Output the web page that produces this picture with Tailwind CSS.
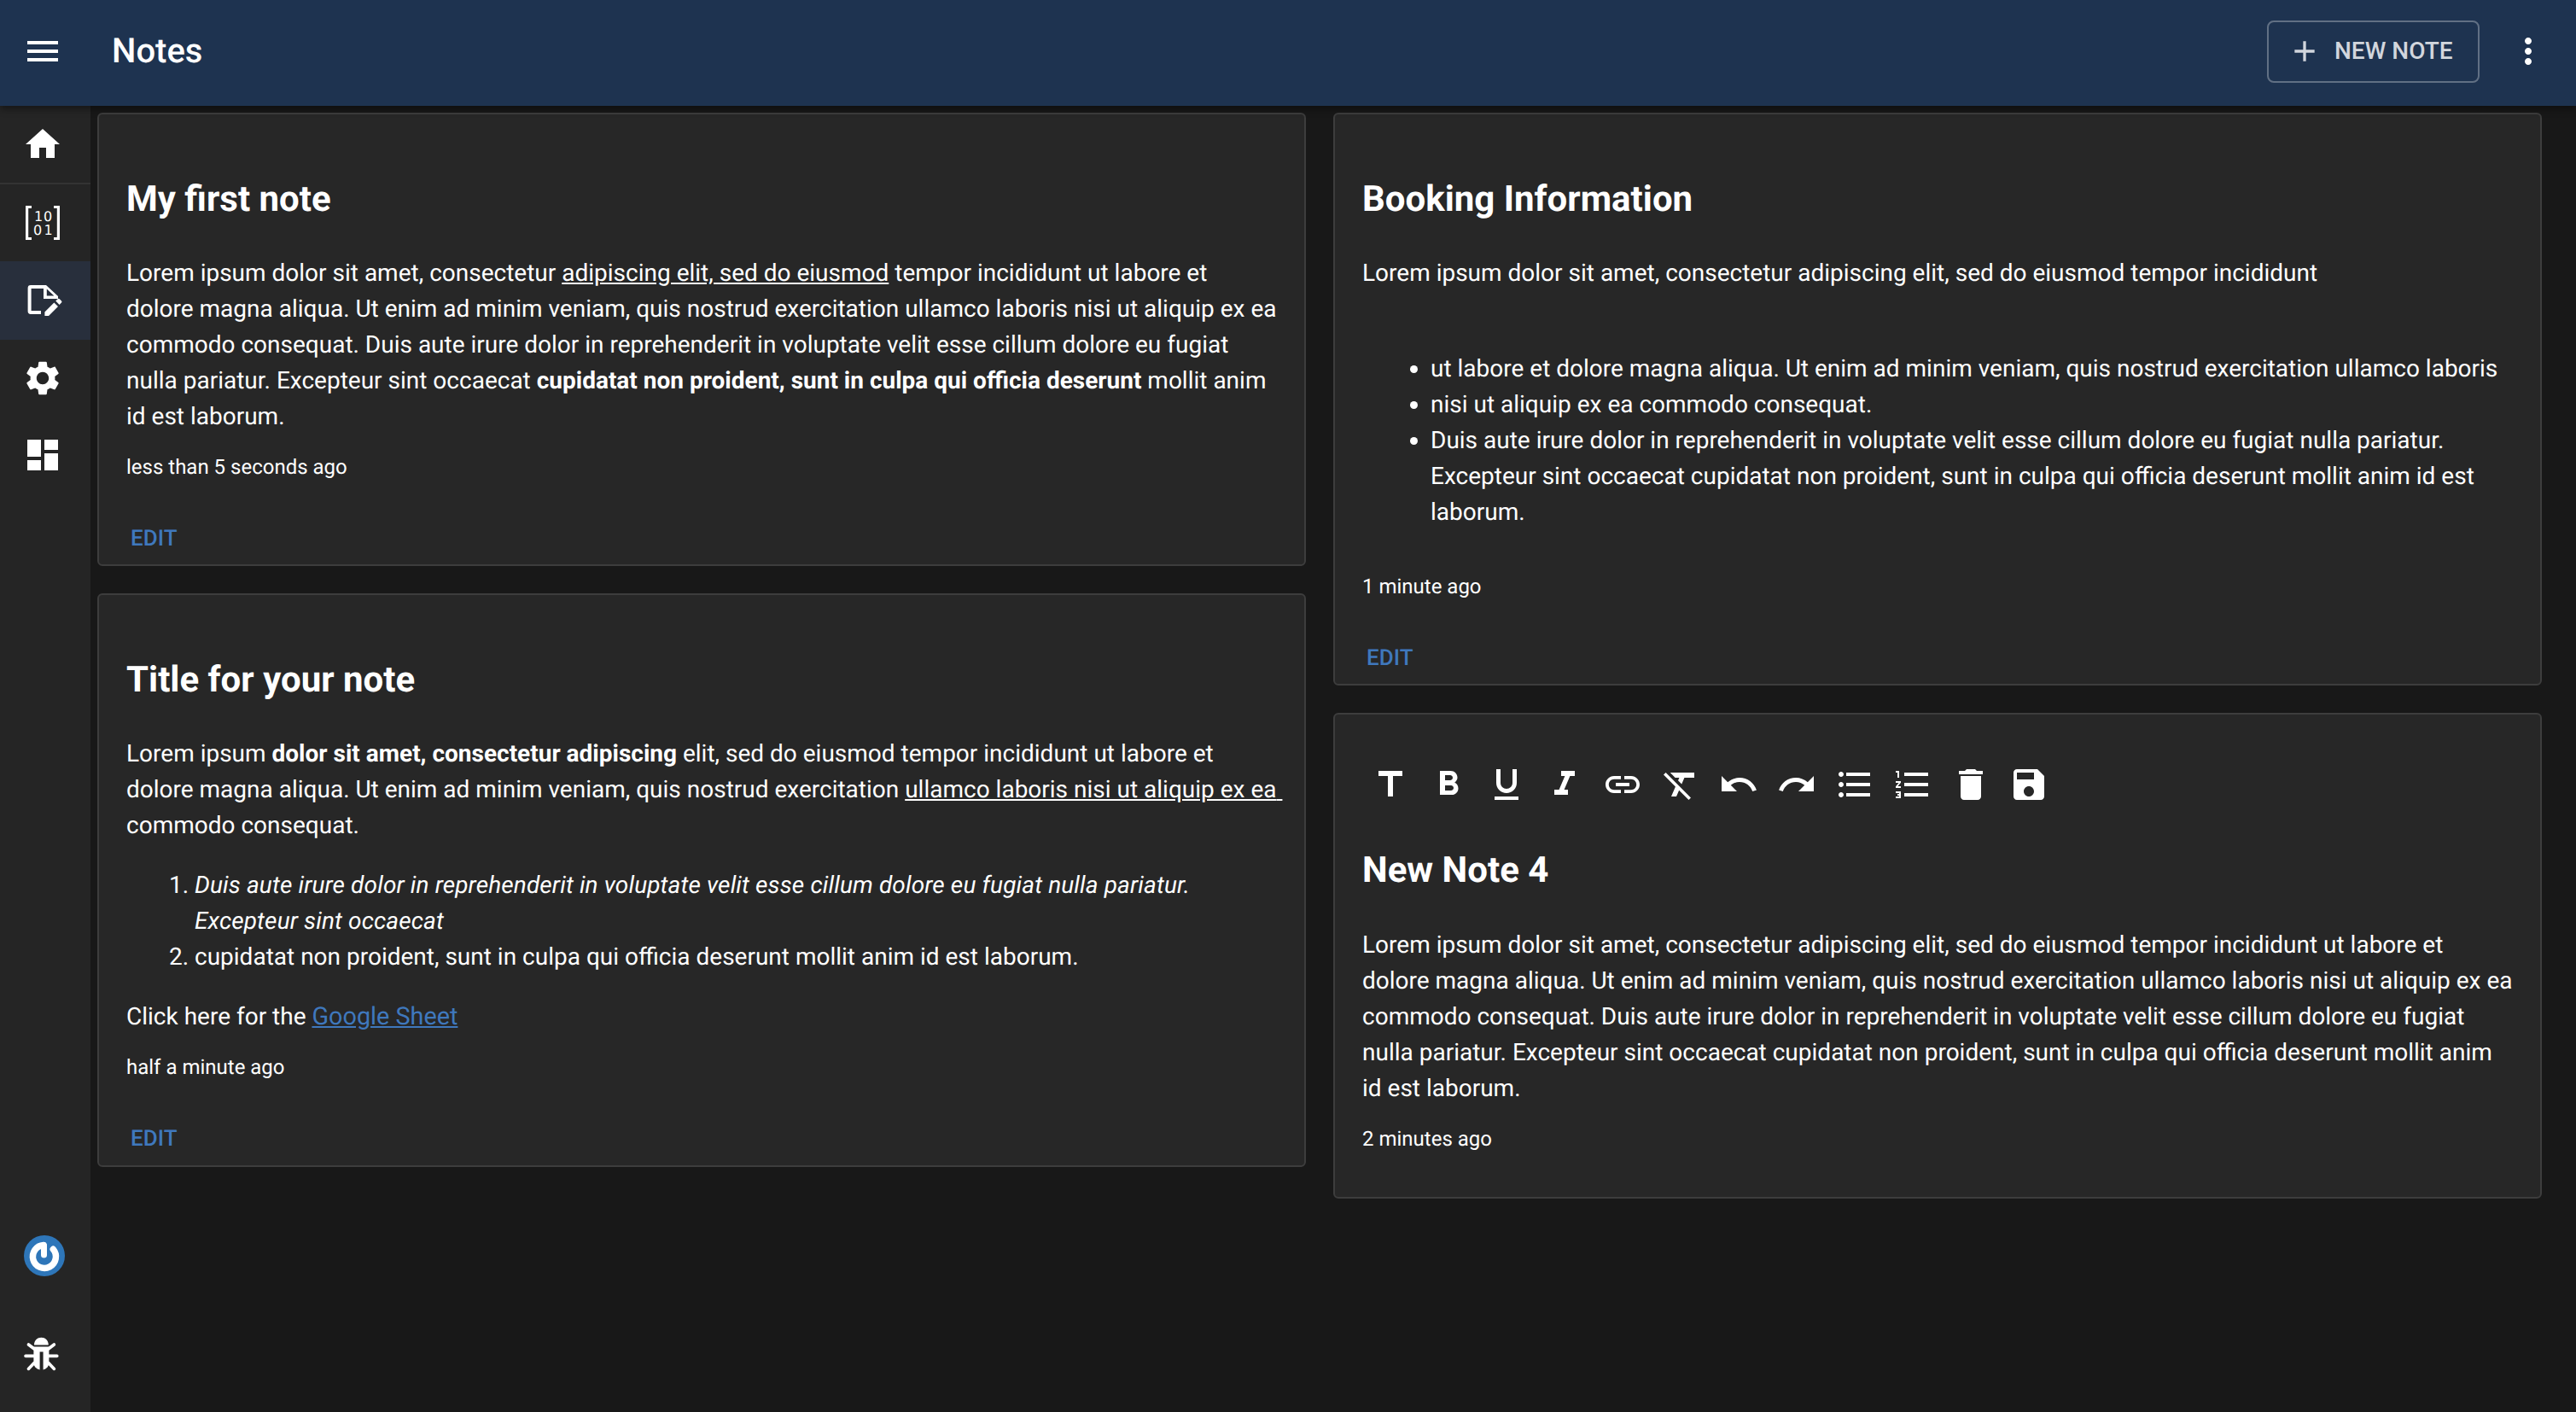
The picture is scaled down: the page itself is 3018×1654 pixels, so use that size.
<!DOCTYPE html>
<html><head><meta charset="utf-8"><script src="https://cdn.jsdelivr.net/npm/@tailwindcss/browser@4"></script></head>
<body class="bg-[#181818] text-white font-['Roboto',sans-serif] [text-rendering:geometricPrecision] h-[1654px] w-[3018px] overflow-hidden flex flex-col">
<header class="h-[124px] shrink-0 bg-[#1e3350] flex items-center pl-[26px] pr-[38px] pb-[4px] shadow-[0_4px_8px_rgba(0,0,0,0.4)] relative z-10">
<svg class="w-[48px] h-[48px] fill-white" viewBox="0 0 24 24"><path d="M3 18h18v-2H3v2zm0-5h18v-2H3v2zm0-7v2h18V6H3z"/></svg>
<h1 class="ml-[57px] text-[40px] leading-[60px] font-medium grow">Notes</h1>
<button class="h-[73px] w-[249px] border-2 border-white/30 rounded-[8px] flex items-center pl-[22px] text-[28px] font-medium text-[#d2d6dd] leading-none">
<svg class="w-[40px] h-[40px] fill-[#d2d6dd] mr-[15px]" viewBox="0 0 24 24"><path d="M19 13h-6v6h-2v-6H5v-2h6V5h2v6h6v2z"/></svg>NEW NOTE</button>
<svg class="ml-[33px] w-[48px] h-[48px] fill-white -mr-[6px]" viewBox="0 0 24 24"><path d="M12 8c1.100 0 2-.9 2-2s-.9-2-2-2-2 .9-2 2 .9 2 2 2zm0 2c-1.100 0-2 .9-2 2s.9 2 2 2 2-.9 2-2-.9-2-2-2zm0 6c-1.100 0-2 .9-2 2s.9 2 2 2 2-.9 2-2-.9-2-2-2z"/></svg>
</header>
<div class="flex grow min-h-0">
<nav class="w-[106px] shrink-0 bg-[#252525] flex flex-col">
<div class="h-[92px] flex items-center pl-[26px] border-b-2 border-[#333]"><svg class="w-[48px] h-[48px] fill-white" viewBox="0 0 24 24"><path d="M10 20v-6h4v6h5v-8h3L12 3 2 12h3v8z"/></svg></div>
<div class="h-[90px] flex items-center pl-[26px]"><svg class="w-[48px] h-[48px] fill-white" viewBox="0 0 24 24"><path d="M2 2h3.500v1.500H3.600v17h1.900V22H2zM22 2h-3.500v1.500h1.900v17h-1.900V22H22z"/><text x="9.600" y="11" font-size="8" font-family="DejaVu Sans" text-anchor="middle">1</text><text x="15" y="11" font-size="8" font-family="DejaVu Sans" text-anchor="middle">0</text><text x="9" y="19" font-size="8" font-family="DejaVu Sans" text-anchor="middle">0</text><text x="15.300" y="19" font-size="8" font-family="DejaVu Sans" text-anchor="middle">1</text></svg></div>
<div class="h-[92px] flex items-center pl-[26px] bg-[#282f3c]"><svg class="w-[48px] h-[48px] fill-white" viewBox="0 0 24 24"><path d="M5 3h8.500v2H5.300v13H11v2H5a1.700 1.700 0 0 1-1.700-1.700V4.700A1.700 1.700 0 0 1 5 3z"/><path fill-rule="evenodd" d="M13 3h1l7 6.500V11H12.500V3zM14.400 5.300v4h4.300z"/><path d="M13.200 21v-2.300l5.500-5.500 2.300 2.300L15.500 21zM19.600 12.300l1.200-1.200a.8.8 0 0 1 1.100 0l1.100 1.100a.8.8 0 0 1 0 1.100l-1.200 1.200z"/></svg></div>
<div class="h-[90px] flex items-center pl-[26px]"><svg class="w-[48px] h-[48px] fill-white" viewBox="0 0 24 24"><path d="M19.140 12.940c.04-.3.06-.61.06-.94 0-.32-.02-.64-.07-.94l2.030-1.580c.18-.14.23-.41.12-.61l-1.920-3.320c-.12-.22-.37-.29-.59-.22l-2.390.96c-.5-.38-1.030-.7-1.620-.94l-.36-2.540c-.04-.24-.24-.41-.48-.41h-3.840c-.24 0-.43.17-.47.41l-.36 2.540c-.59.24-1.130.57-1.620.94l-2.390-.96c-.22-.08-.47 0-.59.22L2.740 8.870c-.12.21-.08.47.12.61l2.030 1.580c-.05.3-.09.63-.09.94s.02.64.07.94l-2.030 1.580c-.18.14-.23.41-.12.61l1.920 3.320c.12.22.37.29.59.22l2.390-.96c.5.38 1.030.7 1.620.94l.36 2.540c.05.24.24.41.48.41h3.840c.24 0 .44-.17.47-.41l.36-2.540c.59-.24 1.130-.56 1.620-.94l2.390.96c.22.08.47 0 .59-.22l1.920-3.320c.12-.22.07-.47-.12-.61l-2.010-1.580zM12 15.600c-1.980 0-3.600-1.620-3.600-3.600s1.620-3.600 3.600-3.600 3.600 1.620 3.600 3.600-1.620 3.600-3.600 3.600z"/></svg></div>
<div class="h-[90px] flex items-center pl-[26px]"><svg class="w-[48px] h-[48px] fill-white" viewBox="0 0 24 24"><path d="M3 13h8V3H3v10zm0 8h8v-6H3v6zm10 0h8V11h-8v10zm0-18v6h8V3h-8z"/></svg></div>
<div class="mt-auto flex flex-col">
<div class="pl-[28px] h-[48px]"><svg class="w-[48px] h-[48px]" viewBox="0 0 48 48"><circle cx="24" cy="24" r="24" fill="#2e76b9"/><path d="M34.300 16.300A13.500 13.500 0 1 1 23 11.500" fill="none" stroke="#fff" stroke-width="7.500" stroke-linecap="round"/><path d="M23.500 12v11" stroke="#fff" stroke-width="7" stroke-linecap="round"/></svg></div>
<div class="pl-[24px] mt-[67px] mb-[44px]"><svg class="w-[48px] h-[48px] fill-white" viewBox="0 0 24 24"><path d="M8 6.800C8 4 10 2.400 12.200 2.400S16.400 4 16.400 6.800zM7.700 7.800h9v9.500c0 2-1.500 3.600-3.400 3.900V10.700h-2v10.500c-2-.3-3.600-1.900-3.600-3.900z"/><path d="M4.700 6.500L8 9M19.700 6.500L16.400 9M3 13.200h5M21.400 13.200h-5M4.700 20.700L8 17.300M19.700 20.700l-3.300-3.400" fill="none" stroke="#fff" stroke-width="1.800" stroke-linecap="round"/></svg></div>
</div>
</nav>
<main class="grow grid grid-cols-2 gap-x-[32px] pl-[8px] pr-[40px] pt-[8px] items-start">
<div class="flex flex-col gap-[32px]">
<article class="bg-[#272727] border-2 border-[#3d3d3d] rounded-[6px] h-[531px] px-[32px] pt-[70px] flex flex-col">
<h2 class="text-[42px] font-bold leading-[60px]">My first note</h2>
<p class="mt-[35px] text-[28px] leading-[42px]">Lorem ipsum dolor sit amet, consectetur <u>adipiscing elit, sed do eiusmod</u> tempor incididunt ut labore et dolore magna aliqua. Ut enim ad minim veniam, quis nostrud exercitation ullamco laboris nisi ut aliquip ex ea commodo consequat. Duis aute irure dolor in reprehenderit in voluptate velit esse cillum dolore eu fugiat nulla pariatur. Excepteur sint occaecat <b>cupidatat non proident, sunt in culpa qui officia deserunt</b> mollit anim id est laborum.</p>
<div class="mt-[20px] text-[24px] leading-[36px]">less than 5 seconds ago</div>
<div class="mt-[48px] ml-[5px] text-[26px] leading-[36px] font-medium text-[#3f78bd]">EDIT</div>
</article>
<article class="bg-[#272727] border-2 border-[#3d3d3d] rounded-[6px] h-[672px] px-[32px] pt-[70px] flex flex-col">
<h2 class="text-[42px] font-bold leading-[60px]">Title for your note</h2>
<p class="mt-[35px] text-[28px] leading-[42px]">Lorem ipsum <b>dolor sit amet, consectetur adipiscing</b> elit, sed do eiusmod tempor incididunt ut labore et dolore magna aliqua. Ut enim ad minim veniam, quis nostrud exercitation <u class="whitespace-pre-wrap">ullamco laboris nisi ut aliquip ex ea </u>commodo consequat.</p>
<ol class="list-decimal pl-[80px] mt-[28px] text-[28px] leading-[42px]"><li><i class="tracking-[0.12px]">Duis aute irure dolor in reprehenderit in voluptate velit esse cillum dolore eu fugiat nulla pariatur. Excepteur sint occaecat</i></li><li>cupidatat non proident, sunt in culpa qui officia deserunt mollit anim id est laborum.</li></ol>
<p class="mt-[28px] text-[28px] leading-[42px]">Click here for the <a class="underline text-[28.8px] text-[#3f78bd]">Google Sheet</a></p>
<div class="mt-[20px] text-[24px] leading-[36px]">half a minute ago</div>
<div class="mt-[48px] ml-[5px] text-[26px] leading-[36px] font-medium text-[#3f78bd]">EDIT</div>
</article>
</div>
<div class="flex flex-col gap-[32px]">
<article class="bg-[#272727] border-2 border-[#3d3d3d] rounded-[6px] h-[671px] px-[32px] pt-[70px] flex flex-col">
<h2 class="text-[42px] font-bold leading-[60px]">Booking Information</h2>
<p class="mt-[35px] text-[28px] leading-[42px]">Lorem ipsum dolor sit amet, consectetur adipiscing elit, sed do eiusmod tempor incididunt</p>
<ul class="list-disc pl-[80px] mt-[70px] text-[28px] leading-[42px]"><li>ut labore et dolore magna aliqua. Ut enim ad minim veniam, quis nostrud exercitation ullamco laboris</li><li>nisi ut aliquip ex ea commodo consequat.</li><li>Duis aute irure dolor in reprehenderit in voluptate velit esse cillum dolore eu fugiat nulla pariatur. Excepteur sint occaecat cupidatat non proident, sunt in culpa qui officia deserunt mollit anim id est laborum.</li></ul>
<div class="mt-[48px] text-[24px] leading-[36px]">1 minute ago</div>
<div class="mt-[48px] ml-[5px] text-[26px] leading-[36px] font-medium text-[#3f78bd]">EDIT</div>
</article>
<article class="bg-[#272727] border-2 border-[#3d3d3d] rounded-[6px] h-[569px] px-[32px] pt-[58px] flex flex-col">
<div class="flex fill-white gap-[20px] pl-[9px] h-[48px]">
<svg class="w-[48px] h-[48px]" viewBox="0 0 24 24"><path d="M5 4v3h5.500v12h3V7H19V4z"/></svg>
<svg class="w-[48px] h-[48px]" viewBox="0 0 24 24"><path d="M15.600 10.790c.97-.67 1.650-1.770 1.650-2.790 0-2.260-1.750-4-4-4H7v14h7.040c2.090 0 3.710-1.700 3.710-3.790 0-1.520-.86-2.820-2.150-3.420zM10 6.500h3c.83 0 1.500.67 1.500 1.500s-.67 1.500-1.500 1.500h-3v-3zm3.500 9H10v-3h3.500c.83 0 1.500.67 1.500 1.500s-.67 1.500-1.500 1.500z"/></svg>
<svg class="w-[48px] h-[48px]" viewBox="0 0 24 24"><path d="M12 17c3.310 0 6-2.690 6-6V3h-2.500v8c0 1.930-1.570 3.500-3.500 3.500S8.500 12.930 8.500 11V3H6v8c0 3.310 2.690 6 6 6zm-7 2v2h14v-2H5z"/></svg>
<svg class="w-[48px] h-[48px]" viewBox="0 0 24 24"><path d="M10 4v3h2.210l-3.420 8H6v3h8v-3h-2.210l3.420-8H18V4z"/></svg>
<svg class="w-[48px] h-[48px]" viewBox="0 0 24 24"><path d="M3.900 12c0-1.710 1.390-3.100 3.100-3.100h4V7H7c-2.760 0-5 2.240-5 5s2.240 5 5 5h4v-1.900H7c-1.710 0-3.100-1.390-3.100-3.100zM8 13h8v-2H8v2zm9-6h-4v1.900h4c1.710 0 3.100 1.390 3.100 3.100s-1.390 3.100-3.100 3.100h-4V17h4c2.760 0 5-2.240 5-5s-2.240-5-5-5z"/></svg>
<svg class="w-[48px] h-[48px]" viewBox="0 0 24 24"><path d="M3.270 5L2 6.270l6.970 6.970L6.500 19h3l1.570-3.660L16.730 21 18 19.730 3.550 5.270 3.270 5zM6 5v.18L8.820 8h2.400l-.72 1.680 2.100 2.100L14.210 8H20V5H6z"/></svg>
<svg class="w-[48px] h-[48px]" viewBox="0 0 24 24"><path d="M12.500 8c-2.650 0-5.050.99-6.900 2.600L2 7v9h9l-3.620-3.620c1.390-1.160 3.160-1.880 5.120-1.880 3.540 0 6.550 2.310 7.600 5.500l2.370-.78C21.080 11.030 17.150 8 12.500 8z"/></svg>
<svg class="w-[48px] h-[48px]" viewBox="0 0 24 24"><path d="M18.400 10.600C16.550 8.990 14.150 8 11.500 8c-4.650 0-8.580 3.030-9.960 7.220L3.900 16c1.050-3.190 4.050-5.500 7.600-5.500 1.950 0 3.730.72 5.120 1.880L13 16h9V7l-3.600 3.600z"/></svg>
<svg class="w-[48px] h-[48px]" viewBox="0 0 24 24"><path d="M4 10.500c-.83 0-1.500.67-1.500 1.500s.67 1.500 1.500 1.500 1.500-.67 1.500-1.500-.67-1.500-1.500-1.500zm0-6c-.83 0-1.500.67-1.500 1.500S3.170 7.500 4 7.500 5.500 6.830 5.500 6 4.830 4.500 4 4.500zm0 12c-.83 0-1.500.68-1.500 1.500s.68 1.500 1.500 1.500 1.500-.68 1.500-1.500-.67-1.500-1.500-1.500zM7 19h14v-2H7v2zm0-6h14v-2H7v2zm0-8v2h14V5H7z"/></svg>
<svg class="w-[48px] h-[48px]" viewBox="0 0 24 24"><path d="M2 17h2v.5H3v1h1v.5H2v1h3v-4H2v1zm1-9h1V4H2v1h1v3zm-1 3h1.800L2 13.100v.9h3v-1H3.200L5 10.900V10H2v1zm5-6v2h14V5H7zm0 14h14v-2H7v2zm0-6h14v-2H7v2z"/></svg>
<svg class="w-[48px] h-[48px]" viewBox="0 0 24 24"><path d="M6 19c0 1.100.9 2 2 2h8c1.100 0 2-.9 2-2V7H6v12zM19 4h-3.500l-1-1h-5l-1 1H5v2h14V4z"/></svg>
<svg class="w-[48px] h-[48px]" viewBox="0 0 24 24"><path d="M17 3H5c-1.110 0-2 .9-2 2v14c0 1.100.89 2 2 2h14c1.100 0 2-.9 2-2V7l-4-4zm-5 16c-1.660 0-3-1.340-3-3s1.340-3 3-3 3 1.340 3 3-1.340 3-3 3zm3-10H5V5h10v4z"/></svg>
</div>
<h2 class="mt-[47px] text-[42px] font-bold leading-[60px]">New Note 4</h2>
<p class="mt-[36px] text-[28px] leading-[42px]">Lorem ipsum dolor sit amet, consectetur adipiscing elit, sed do eiusmod tempor incididunt ut labore et dolore magna aliqua. Ut enim ad minim veniam, quis nostrud exercitation ullamco laboris nisi ut aliquip ex ea commodo consequat. Duis aute irure dolor in reprehenderit in voluptate velit esse cillum dolore eu fugiat nulla pariatur. Excepteur sint occaecat cupidatat non proident, sunt in culpa qui officia deserunt mollit anim id est laborum.</p>
<div class="mt-[20px] text-[24px] leading-[36px]">2 minutes ago</div>
</article>
</div>
</main>
</div>
</body></html>
